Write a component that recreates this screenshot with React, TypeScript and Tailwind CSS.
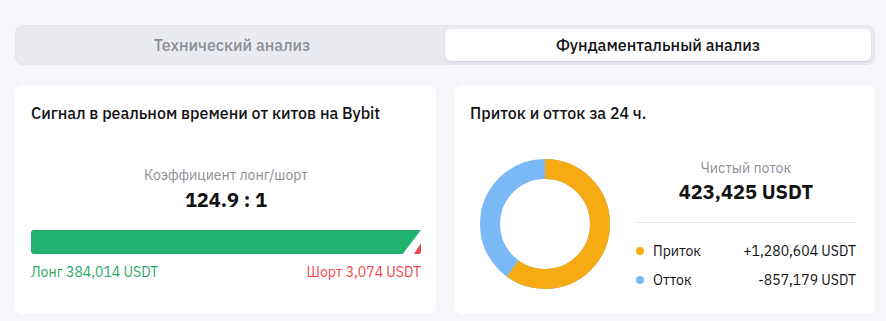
import React from 'react';

const font = { fontFamily: '"IBM Plex Sans", Roboto, "Noto Sans", sans-serif' };

function Donut() {
  // inflow share of the ring, drawn clockwise from 12 o'clock
  const r = 55;
  const c = 2 * Math.PI * r;
  const inflow = 1280604 / (1280604 + 857179);
  return (
    <svg width="130" height="130" viewBox="0 0 130 130">
      <circle cx="65" cy="65" r={r} fill="none" stroke="#7ab8f7" strokeWidth="20" />
      <circle
        cx="65"
        cy="65"
        r={r}
        fill="none"
        stroke="#f7ab12"
        strokeWidth="20"
        strokeDasharray={`${c * inflow} ${c}`}
        transform="rotate(-90 65 65)"
      />
    </svg>
  );
}

export default function App() {
  return (
    <div className="min-h-[321px] w-[886px] bg-[#f5f6fa] pl-[15px] pt-[25px]" style={font}>
      {/* Tabs */}
      <div className="flex h-10 w-[860px] rounded-lg border border-[#e4e6eb] bg-[#e9ebf0] p-[3px]">
        <button className="flex-1 rounded-md text-[16px] font-medium text-[#8b8e96]">
          Технический анализ
        </button>
        <button className="flex-1 rounded-md bg-white text-[16px] font-medium text-[#121214] shadow-sm">
          Фундаментальный анализ
        </button>
      </div>

      <div className="mt-5 flex w-[860px] gap-[19px]">
        {/* Whale signal */}
        <div className="h-[229px] w-[421px] rounded-lg bg-white pl-4 pr-[15px] pt-[18px]">
          <h2 className="h-5 text-[16px] font-medium leading-5 text-[#121214]">
            Сигнал в реальном времени от китов на Bybit
          </h2>
          <div className="mt-[43px] text-center text-[14px] leading-[18px] text-[#8b8e96]">
            Коэффициент лонг/шорт
          </div>
          <div className="mt-1 text-center text-[20px] font-bold leading-6 text-[#121214]">124.9 : 1</div>
          <div className="relative mt-[18px] h-6 w-full">
            <div
              className="absolute inset-0 rounded-l-[3px] bg-[#21b26d]"
              style={{ clipPath: 'polygon(0 0, 100% 0, 95.3% 100%, 0 100%)' }}
            />
            <div
              className="absolute bottom-0 right-0 h-[11px] w-[7px] bg-[#f0454f]"
              style={{ clipPath: 'polygon(100% 0, 100% 100%, 0 100%)', borderBottomRightRadius: 2 }}
            />
          </div>
          <div className="mt-[9px] flex justify-between text-[14px] leading-[18px]">
            <span className="text-[#2aa868]">Лонг 384,014 USDT</span>
            <span className="text-[#f0454f]">Шорт 3,074 USDT</span>
          </div>
        </div>

        {/* Inflow / outflow */}
        <div className="h-[229px] w-[420px] rounded-lg bg-white pl-[15px] pr-[19px] pt-[18px]">
          <h2 className="h-5 text-[16px] font-medium leading-5 text-[#121214]">Приток и отток за 24 ч.</h2>
          <div className="mt-9 flex">
            <div className="ml-[10px]">
              <Donut />
            </div>
            <div className="ml-[26px] flex-1">
              <div className="text-center text-[14px] leading-[18px] text-[#8b8e96]">Чистый поток</div>
              <div className="mt-[3px] text-center text-[20px] font-bold leading-6 text-[#121214]">
                423,425 USDT
              </div>
              <div className="mt-[18px] h-px bg-[#e6e8ec]" />
              <div className="mt-[19px] flex items-center text-[14px] leading-[18px] text-[#121214]">
                <span className="mr-[9px] h-2 w-2 rounded-full bg-[#f7ab12]" />
                <span className="flex-1">Приток</span>
                <span>+1,280,604 USDT</span>
              </div>
              <div className="mt-[11px] flex items-center text-[14px] leading-[18px] text-[#121214]">
                <span className="mr-[9px] h-2 w-2 rounded-full bg-[#7ab8f7]" />
                <span className="flex-1">Отток</span>
                <span>-857,179 USDT</span>
              </div>
            </div>
          </div>
        </div>
      </div>
    </div>
  );
}
